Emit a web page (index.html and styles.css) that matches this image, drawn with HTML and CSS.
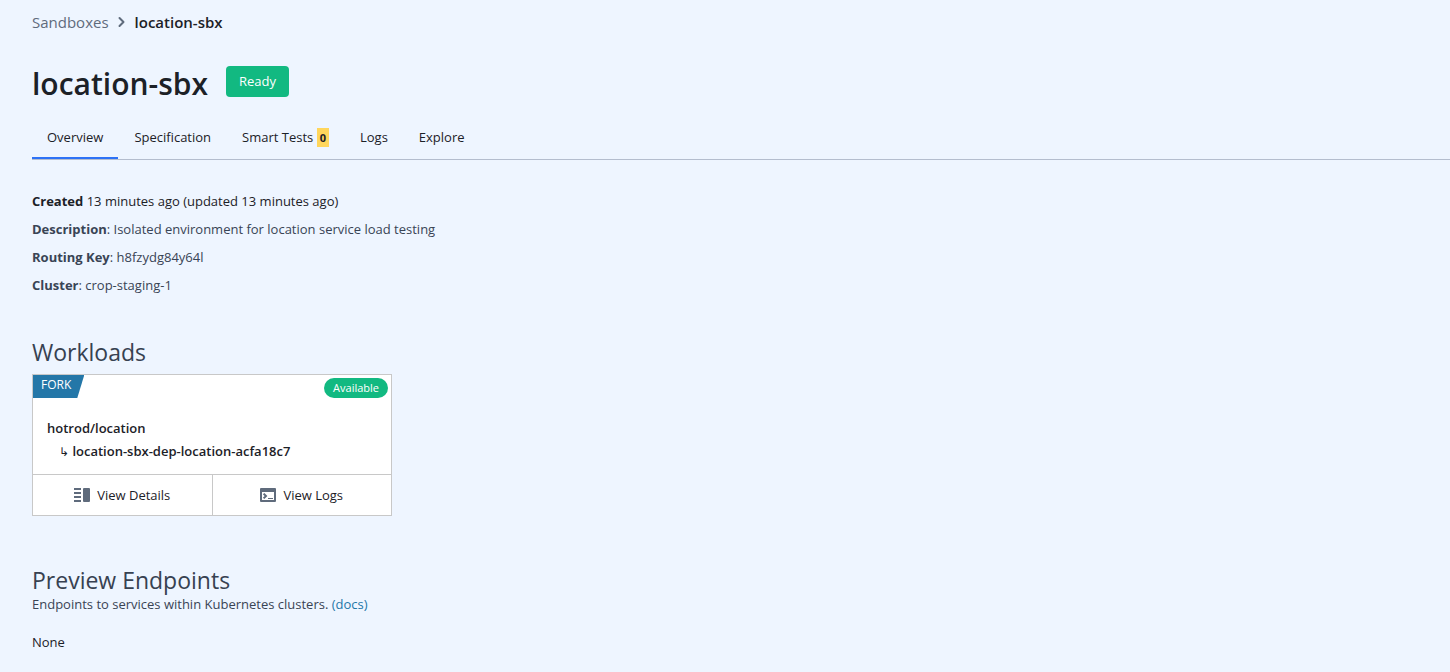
FILE: index.html
```html
<!DOCTYPE html>
<html lang="en">
<head>
<meta charset="utf-8">
<meta name="viewport" content="width=device-width, initial-scale=1">
<title>location-sbx</title>
<link rel="stylesheet" href="styles.css">
</head>
<body>
<main class="page">
  <nav class="breadcrumb" aria-label="Breadcrumb">
    <a class="breadcrumb-link" href="#">Sandboxes</a>
    <svg class="breadcrumb-chevron" viewBox="0 0 16 16" aria-hidden="true"><path d="M5.5 4 9.500 8l-4 4" fill="none" stroke="currentColor" stroke-width="2" stroke-linecap="round" stroke-linejoin="round"/></svg>
    <span class="breadcrumb-current">location-sbx</span>
  </nav>

  <header class="title-row">
    <h1 class="title">location-sbx</h1>
    <span class="status">Ready</span>
  </header>

  <nav class="tabs" aria-label="Sections">
    <a class="tab tab-active" href="#">Overview</a>
    <a class="tab" href="#">Specification</a>
    <a class="tab" href="#">Smart Tests <span class="tab-count">0</span></a>
    <a class="tab" href="#">Logs</a>
    <a class="tab" href="#">Explore</a>
  </nav>

  <section class="meta">
    <p class="meta-line meta-strong"><b>Created</b> 13 minutes ago (updated 13 minutes ago)</p>
    <p class="meta-line"><b>Description</b>: Isolated environment for location service load testing</p>
    <p class="meta-line"><b>Routing Key</b>: h8fzydg84y64l</p>
    <p class="meta-line"><b>Cluster</b>: crop-staging-1</p>
  </section>

  <section class="workloads">
    <h2 class="section-title">Workloads</h2>
    <article class="card">
      <div class="card-top">
        <span class="ribbon">FORK</span>
        <span class="pill">Available</span>
      </div>
      <div class="card-body">
        <p class="workload-name">hotrod/location</p>
        <p class="workload-child"><span class="arrow">↳</span> location-sbx-dep-location-acfa18c7</p>
      </div>
      <div class="card-actions">
        <button class="action" type="button">
          <svg class="action-icon" viewBox="0 0 16 16" aria-hidden="true"><path d="M0 1h7v2H0zM0 5h7v2H0zM0 9h7v2H0zM0 13h7v2H0z" fill="currentColor"/><rect x="9" y="1" width="7" height="14" rx="1" fill="currentColor"/></svg>
          View Details
        </button>
        <button class="action" type="button">
          <svg class="action-icon" viewBox="0 0 16 16" aria-hidden="true"><path fill="currentColor" fill-rule="evenodd" d="M1 1h14a1 1 0 0 1 1 1v12a1 1 0 0 1-1 1H1a1 1 0 0 1-1-1V2a1 1 0 0 1 1-1zM2 5v8h12V5z"/><path d="M3.6 6.6 6 9l-2.400 2.400" fill="none" stroke="currentColor" stroke-width="2"/><path d="M8 11h5v1H8z" fill="currentColor"/></svg>
          View Logs
        </button>
      </div>
    </article>
  </section>

  <section class="endpoints">
    <h2 class="section-title">Preview Endpoints</h2>
    <p class="section-note">Endpoints to services within Kubernetes clusters. <a class="docs-link" href="#">(docs)</a></p>
    <p class="empty">None</p>
  </section>
</main>
</body>
</html>
```
FILE: styles.css
```css
* {
  box-sizing: border-box;
}

body {
  margin: 0;
  background: #eef5ff;
  color: #1c2127;
  font-family: "Segoe UI", "Open Sans", "Noto Sans", sans-serif;
  font-size: 13px;
  line-height: 20px;
}

h1, h2, p {
  margin: 0;
}

a {
  color: inherit;
  text-decoration: none;
}

.page {
  padding: 10px 0 16px 32px;
}

.breadcrumb {
  display: flex;
  align-items: center;
  gap: 5px;
  font-size: 15px;
  line-height: 24px;
}

.breadcrumb-link {
  color: #5f6b7c;
}

.breadcrumb-chevron {
  width: 16px;
  height: 16px;
  color: #5f6b7c;
}

.breadcrumb-current {
  font-weight: 600;
}

.title-row {
  display: flex;
  align-items: flex-start;
  gap: 18px;
  margin-top: 32px;
}

.title {
  font-size: 30px;
  font-weight: 600;
  line-height: 36px;
}

.status {
  padding: 5px 13px;
  border-radius: 4px;
  background: #12b981;
  color: #fff;
  line-height: 21px;
}

.tabs {
  display: flex;
  gap: 1px;
  margin-top: 11px;
  border-bottom: 1px solid #b4bdce;
}

.tab {
  padding: 14px 15px 10px;
  border-bottom: 2px solid transparent;
}

.tab-active {
  border-bottom-color: #2d72f6;
}

.tab-count {
  display: inline-block;
  padding: 0 3px;
  background: #ffd65c;
  font-size: 11px;
  font-weight: 700;
  line-height: 19px;
}

.meta {
  display: grid;
  gap: 8px;
  margin-top: 31px;
}

.meta-line {
  color: #394455;
}

.meta-strong {
  color: #1c2127;
}

.workloads {
  margin-top: 41px;
}

.section-title {
  color: #374151;
  font-size: 23px;
  font-weight: 400;
  line-height: 32px;
}

.card {
  width: 360px;
  max-width: 100%;
  margin-top: 6px;
  border: 1px solid #c8c8c8;
  background: #fff;
}

.card-top {
  display: flex;
  align-items: flex-start;
  justify-content: space-between;
}

.ribbon {
  padding: 0 13px 3px 8px;
  background: #2477a8;
  clip-path: polygon(0 0, 100% 0, calc(100% - 7px) 100%, 0 100%);
  color: #fff;
  font-size: 12px;
}

.pill {
  margin: 3px 3px 0 0;
  padding: 0 9px;
  border-radius: 10px;
  background: #12b981;
  color: #fff;
  font-size: 11px;
}

.card-body {
  display: grid;
  gap: 3px;
  padding: 20px 14px 12px;
  font-weight: 600;
}

.workload-child {
  padding-left: 12px;
}

.arrow {
  font-size: 12px;
  font-weight: 400;
}

.card-actions {
  display: flex;
  border-top: 1px solid #c8c8c8;
}

.action {
  display: flex;
  flex: 1;
  align-items: center;
  justify-content: center;
  gap: 7px;
  padding: 10px;
  border: 0;
  background: none;
  color: #1c2127;
  font: inherit;
}

.action + .action {
  border-left: 1px solid #c8c8c8;
}

.action-icon {
  width: 16px;
  height: 16px;
  color: #5f6b7c;
}

.endpoints {
  margin-top: 48px;
}

.section-note {
  color: #394455;
}

.section-title + .section-note {
  margin-top: -2px;
}

.docs-link {
  color: #2477a8;
}

.empty {
  margin-top: 18px;
}
```
